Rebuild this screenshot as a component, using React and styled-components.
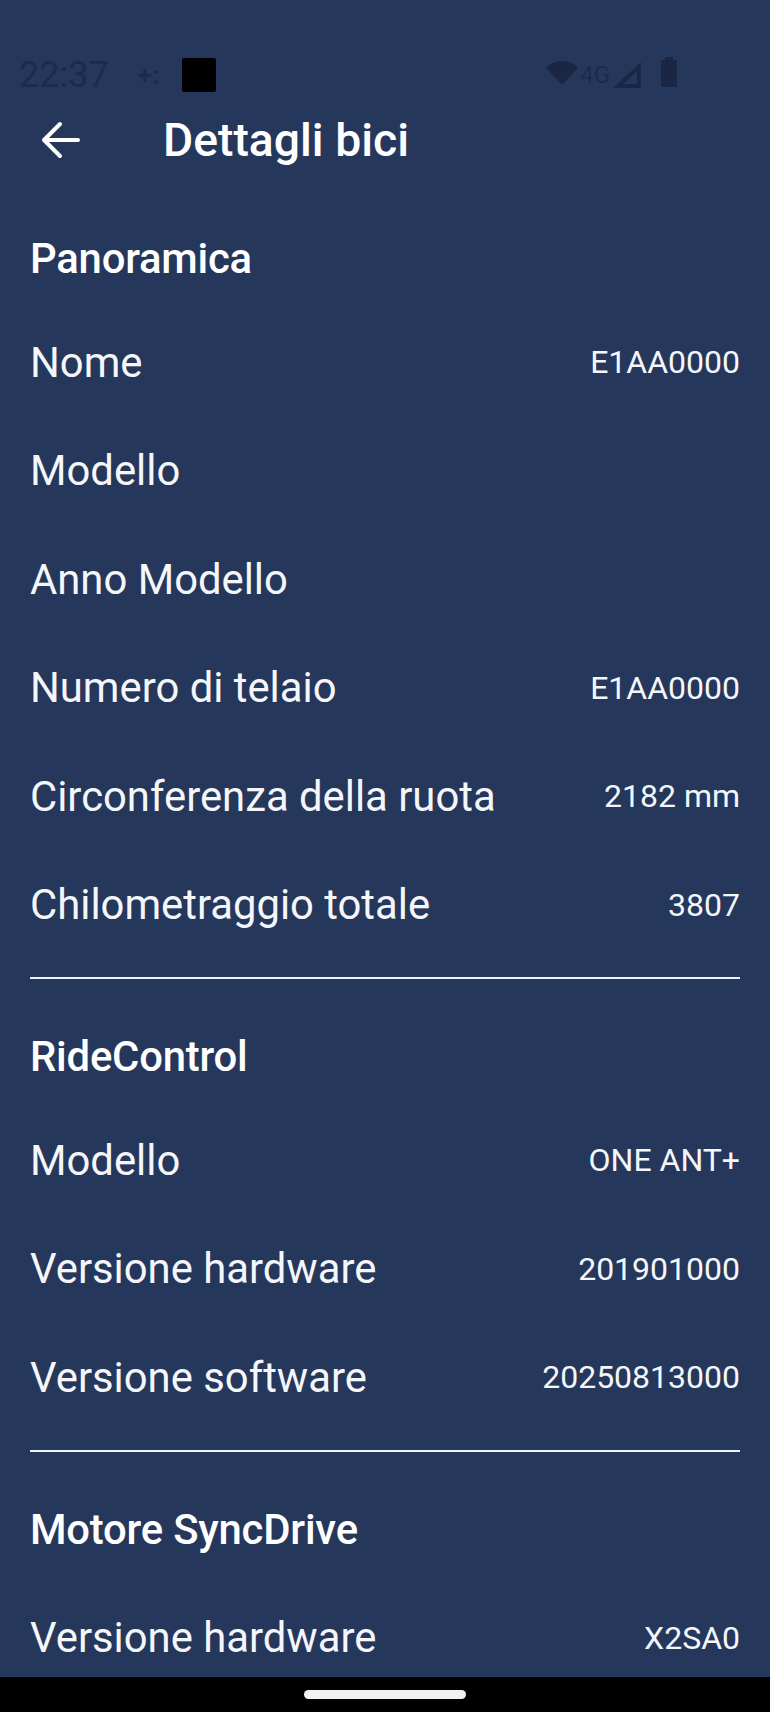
import React from "react";
import styled, { createGlobalStyle } from "styled-components";

const Global = createGlobalStyle`
  html, body { margin: 0; padding: 0; background: #26375c; }
  #root { width: 770px; height: 1712px; overflow: hidden; }
`;

const Screen = styled.div`
  width: 770px; height: 1712px; display: flex; flex-direction: column;
  background: #26375c; font-family: Roboto, "Liberation Sans", sans-serif; color: #f4f6fa; overflow: hidden;
`;
const Main = styled.main`flex: 1; min-height: 0; overflow: hidden; padding-top: 53px;`;
const StatusBar = styled.div`
  height: 44px; display: flex; align-items: center; padding: 0 0 0 19px;
`;
const Clock = styled.span`font-size: 36px; line-height: 44px; width: 119px; color: #1c2a4b;`;
const Sparkle = styled.span`font-size: 26px; width: 44px; color: #1c2a4b; font-weight: 700;`;
const BlackSquare = styled.div`width: 34px; height: 34px; background: #000; border-radius: 2px;`;
const StatusIcons = styled.div`margin-left: auto; margin-right: 92px; display: flex; align-items: center; height: 44px;`;
const WifiIcon = styled.svg`margin-bottom: 4px;`;
const FourG = styled.span`font-size: 24px; color: #1c2a4b; margin: 0 2px 0 1px;`;
const BatteryIcon = styled.svg`margin: 0 0 6px 18px;`;
const AppBar = styled.header`
  height: 76px; display: flex; align-items: center; padding-left: 41px; margin: 5px 0 3px;
`;
const BackIcon = styled.svg`width: 40px; height: 40px; flex: none;`;
const Title = styled.h1`margin: 0 0 0 82px; font-size: 46.3px; font-weight: 500; line-height: 76px; color: #fff;`;
const Section = styled.section`
  padding: 26px 30px 18px 30px;
`;
const SectionTitle = styled.h2`
  margin: 0; font-size: 41.8px; font-weight: 500; color: #fff; line-height: 103px; letter-spacing: -0.2px;
  height: ${(p) => p.$height}px;
`;
const Row = styled.div`
  height: 108.5px; display: flex; align-items: center; justify-content: space-between;
`;
const Label = styled.span`font-size: 41.8px; color: #f4f6fa;`;
const Value = styled.span`font-size: 32px; color: #f4f6fa;`;
const Divider = styled.hr`margin: 0 30px; border: 0; height: 2px; background: #f0f2f6;`;
const NavBar = styled.footer`
  height: 35px; flex: none; background: #000; display: flex; justify-content: center; align-items: center;
`;
const Handle = styled.div`width: 162px; height: 9px; border-radius: 5px; background: #f2f2f2;`;

const sections = [
  { title: "Panoramica", height: 101, rows: [["Nome", "E1AA0000"], ["Modello", ""], ["Anno Modello", ""], ["Numero di telaio", "E1AA0000"], ["Circonferenza della ruota", "2182 mm"], ["Chilometraggio totale", "3807"]] },
  { title: "RideControl", height: 101, rows: [["Modello", "ONE ANT+"], ["Versione hardware", "201901000"], ["Versione software", "20250813000"]] },
  { title: "Motore SyncDrive", height: 106, rows: [["Versione hardware", "X2SA0"]] },
];

export default function App() {
  return (
    <Screen>
      <Global />
      <Main>
        <StatusBar>
          <Clock>22:37</Clock>
          <Sparkle>+:</Sparkle>
          <BlackSquare />
          <StatusIcons>
            <WifiIcon width="34" height="26" viewBox="0 0 34 26"><path d="M1 8C5 3 11 1 17 1s12 2 16 7L17 25z" fill="#1a2644" /></WifiIcon>
            <FourG>4G</FourG>
            <svg width="30" height="30" viewBox="0 0 30 30"><path d="M29 2v26H1z M25 11 L11 24 H25z" fill="#1a2644" fillRule="evenodd" /></svg>
            <BatteryIcon width="18" height="30" viewBox="0 0 18 30"><path d="M5 0h8v3h4v27H1V3h4z" fill="#1a2644" /></BatteryIcon>
          </StatusIcons>
        </StatusBar>
        <AppBar>
          <BackIcon viewBox="0 0 40 40" fill="none" stroke="#fff" strokeWidth="4" strokeLinecap="round" strokeLinejoin="round">
            <path d="M37 20H4M19 4 3 20l16 16" />
          </BackIcon>
          <Title>Dettagli bici</Title>
        </AppBar>
        {sections.map((s, i) => (
          <React.Fragment key={s.title}>
            {i > 0 && <Divider />}
            <Section>
              <SectionTitle $height={s.height}>{s.title}</SectionTitle>
              {s.rows.map(([l, v]) => (
                <Row key={l}><Label>{l}</Label><Value>{v}</Value></Row>
              ))}
            </Section>
          </React.Fragment>
        ))}
      </Main>
      <NavBar><Handle /></NavBar>
    </Screen>
  );
}
